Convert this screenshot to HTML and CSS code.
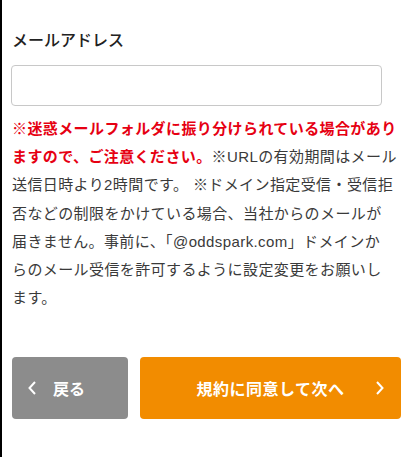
FILE: index.html
```html
<!DOCTYPE html>
<html lang="ja">
<head>
<meta charset="utf-8">
<link rel="stylesheet" href="styles.css">
</head>
<body>
<div class="page">
  <div class="label">メールアドレス</div>
  <input class="field" type="text">
  <p class="note"><span class="warn">※迷惑メールフォルダに振り分けられている場合があり<br>ますので、ご注意ください。</span>※URLの有効期間はメール<br>送信日時より2時間です。 ※ドメイン指定受信・受信拒<br>否などの制限をかけている場合、当社からのメールが<br>届きません。事前に、「@oddspark.com」ドメインか<br>らのメール受信を許可するように設定変更をお願いし<br>ます。</p>
  <div class="actions">
    <button class="btn back"><svg class="chev" viewBox="0 0 8 14"><path d="M7 1 L1.5 7 L7 13" fill="none" stroke="#fff" stroke-width="2"/></svg><span>戻る</span></button>
    <button class="btn next"><span>規約に同意して次へ</span><svg class="chev right" viewBox="0 0 8 14"><path d="M1 1 L6.5 7 L1 13" fill="none" stroke="#fff" stroke-width="2"/></svg></button>
  </div>
</div>
</body>
</html>
```
FILE: styles.css
```css
html, body {
  margin: 0;
  padding: 0;
  background: #fff;
}
body {
  font-family: "Noto Sans CJK JP", "Noto Sans", sans-serif;
}
.page {
  border-left: 2px solid #000;
  min-height: 457px;
  box-sizing: border-box;
  padding: 27px 8px 0 10px;
}
.label {
  font-size: 16px;
  line-height: 24px;
  font-weight: 500;
  color: #222;
}
.field {
  display: block;
  box-sizing: border-box;
  width: 371px;
  height: 41px;
  margin: 14px 0 0 -1px;
  border: 1px solid #c8c8c8;
  border-radius: 4px;
  background: #fff;
  outline: none;
}
.note {
  margin: 9px -20px 0 0;
  font-family: "Liberation Sans", "Noto Sans CJK JP", sans-serif;
  font-size: 15px;
  line-height: 28.2px;
  color: #3a3a3a;
  letter-spacing: 0.4px;
  white-space: nowrap;
}
.warn {
  color: #e60012;
  font-weight: 700;
}
.actions {
  display: flex;
  gap: 12px;
  margin-top: 45px;
}
.btn {
  position: relative;
  height: 62px;
  border: none;
  border-radius: 4px;
  color: #fff;
  font-family: inherit;
  font-size: 16px;
  font-weight: 700;
  display: flex;
  align-items: center;
  padding: 0;
}
.back {
  width: 116px;
  background: #8c8c8c;
  padding-left: 16px;
  gap: 17px;
}
.next {
  width: 261px;
  background: #f28c00;
  justify-content: center;
  letter-spacing: 0.5px;
}
.chev {
  width: 8px;
  height: 14px;
}
.chev.right {
  position: absolute;
  right: 17px;
  top: 24px;
}
```
